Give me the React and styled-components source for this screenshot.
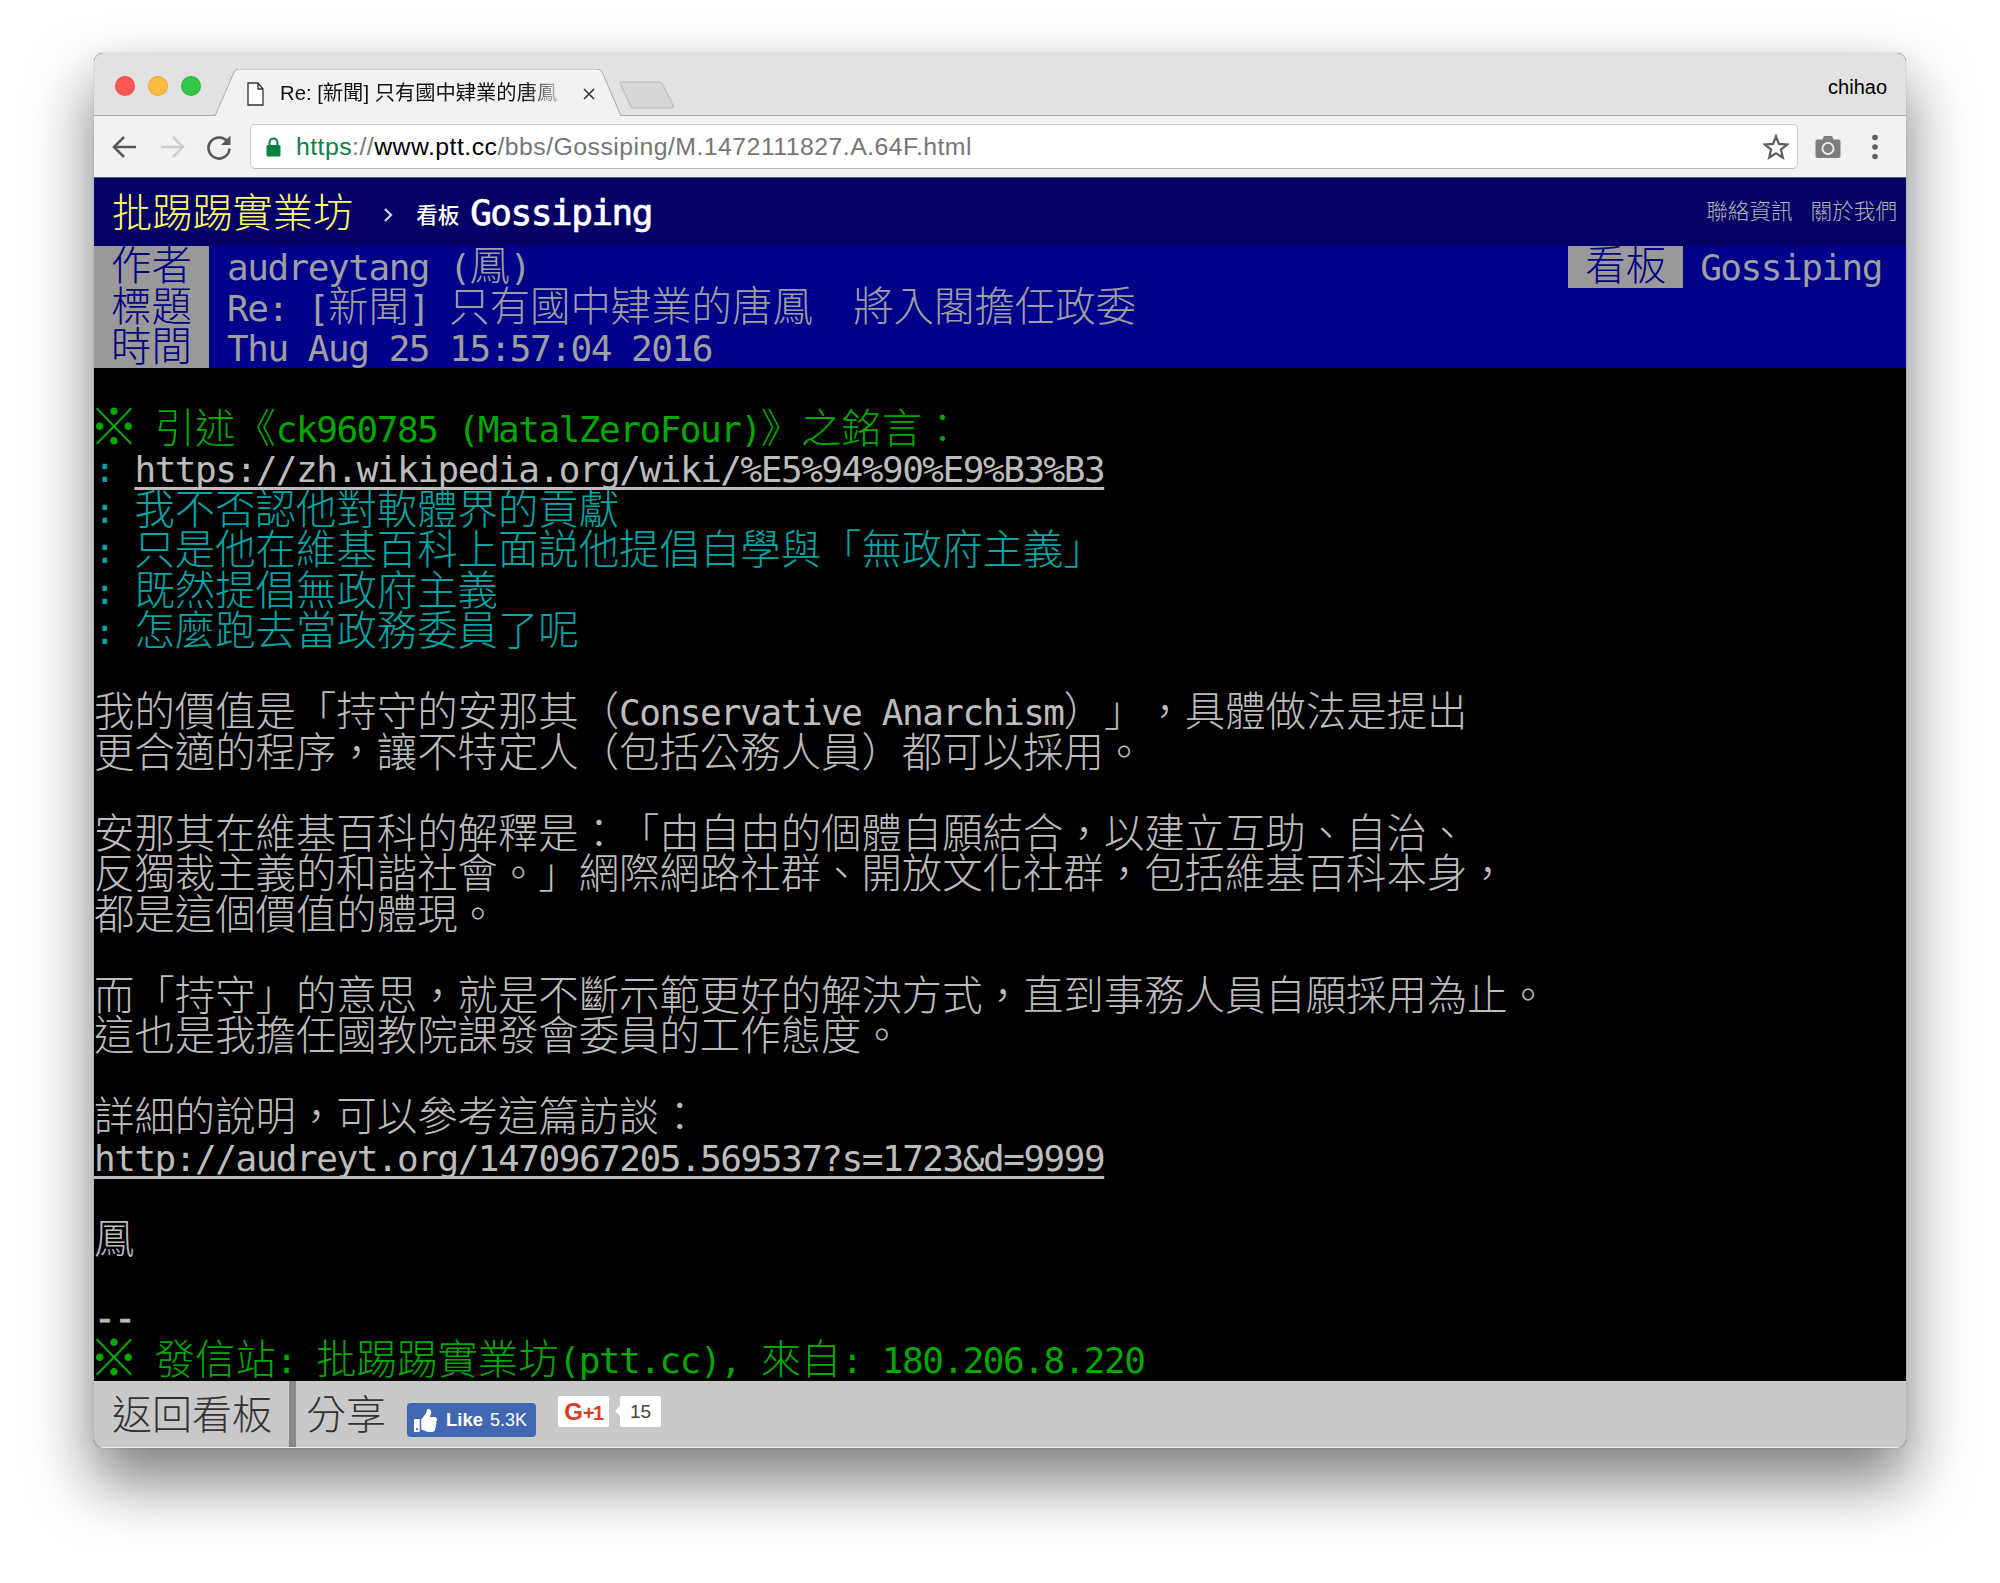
import React from 'react';
import styled, { createGlobalStyle } from 'styled-components';
import { FaThumbsUp } from 'react-icons/fa';

const Global = createGlobalStyle`
  html, body { margin: 0; padding: 0; background: #fff; }
  #root { width: 2000px; height: 1583px; overflow: hidden; }
`;

const Page = styled.div`
  width: 2000px;
  height: 1583px;
  padding: 53px 94px 0 94px;
  box-sizing: border-box;
  background: #fff;
`;

const Win = styled.div`
  width: 1812px;
  height: 1395px;
  display: flex;
  flex-direction: column;
  border-radius: 9px;
  overflow: hidden;
  background: #000;
`;

const WinShadow = styled.div`
  border-radius: 9px;
  box-shadow: 0 32px 62px 2px rgba(0, 0, 0, 0.5), 0 0 1px rgba(0, 0, 0, 0.5);
  width: 1812px;
`;

const TabStrip = styled.div`
  height: 62px;
  flex: none;
  display: flex;
  align-items: flex-end;
  background: #e1e1e1;
  border-bottom: 1px solid #a9a9a9;
  padding-left: 21px;
  position: relative;
`;

const Lights = styled.div`
  display: flex;
  gap: 13px;
  align-self: flex-start;
  margin-top: 23px;
  width: 100px;
  flex: none;
`;

const Light = styled.span`
  width: 20px;
  height: 20px;
  border-radius: 50%;
  background: ${p => p.$c};
  box-shadow: inset 0 0 0 1px rgba(0, 0, 0, 0.1);
`;

const Tab = styled.div`
  position: relative;
  width: 408px;
  height: 47px;
  margin-bottom: -1px;
  flex: none;
  display: flex;
  align-items: flex-start;
  padding: 12px 0 0 32px;
  box-sizing: border-box;
  font: 20.3px/24px "Liberation Sans", "Noto Sans CJK TC", sans-serif;
  color: #111;
`;

const TabShape = styled.svg`
  position: absolute;
  inset: 0;
  width: 408px;
  height: 47px;
`;

const TabIcon = styled.svg`
  position: relative;
  width: 17px;
  height: 24px;
  flex: none;
  margin: 1px 16px 0 0;
`;

const TabTitle = styled.span`
  position: relative;
  width: 278px;
  white-space: pre;
  overflow: hidden;
  -webkit-mask-image: linear-gradient(90deg, #000 88%, rgba(0, 0, 0, 0.25) 100%);
  mask-image: linear-gradient(90deg, #000 88%, rgba(0, 0, 0, 0.25) 100%);
`;

const TabClose = styled.svg`
  position: relative;
  width: 12px;
  height: 12px;
  margin: 7px 0 0 25px;
  flex: none;
`;

const NewTab = styled.svg`
  width: 56px;
  height: 28px;
  flex: none;
  margin: 0 0 6px -4px;
`;

const Profile = styled.div`
  margin-left: auto;
  align-self: flex-start;
  margin-top: 22px;
  padding-right: 19px;
  font: 20px/24px "Liberation Sans", sans-serif;
  color: #000;
`;

const Toolbar = styled.div`
  height: 62px;
  flex: none;
  display: flex;
  align-items: center;
  background: #f2f2f2;
  border-bottom: 1px solid #55557a;
  box-sizing: border-box;
  padding-left: 17px;
`;

const NavIcon = styled.svg`
  width: 28px;
  height: 28px;
  flex: none;
  margin-right: ${p => p.$mr || 19}px;
`;

const Omnibox = styled.div`
  width: 1548px;
  height: 45px;
  box-sizing: border-box;
  flex: none;
  display: flex;
  align-items: center;
  background: #fff;
  border: 1px solid #cfcfcf;
  border-bottom-color: #bbb;
  border-radius: 5px;
  padding: 0 8px 0 15px;
`;

const Lock = styled.svg`
  width: 15px;
  height: 20px;
  flex: none;
  margin-right: 15px;
`;

const Url = styled.div`
  font: 24.8px/30px "Liberation Sans", sans-serif;
  letter-spacing: 0.47px;
  white-space: pre;
  color: #757575;
`;

const UrlPart = styled.span`
  color: ${p => p.$c};
`;

const Star = styled.svg`
  width: 26px;
  height: 26px;
  margin-left: auto;
  flex: none;
`;

const Camera = styled.svg`
  width: 26px;
  height: 24px;
  flex: none;
  margin-left: 17px;
`;

const Dots = styled.svg`
  width: 8px;
  height: 26px;
  flex: none;
  margin-left: 30px;
`;

const TopBar = styled.div`
  height: 68px;
  flex: none;
  display: flex;
  align-items: center;
  background: #060066;
  padding: 0 9px 0 18px;
`;

const Brand = styled.span`
  font: 300 40.2px/1 "Noto Sans CJK TC", sans-serif;
  color: #ffff66;
  margin-top: -4px;
`;

const Crumb = styled.svg`
  width: 10px;
  height: 16px;
  margin: 6px 23px 0 30px;
  flex: none;
`;

const BoardLabel = styled.span`
  font: 500 21.5px/1 "Noto Sans CJK TC", sans-serif;
  color: #fff;
  margin: 4px 11px 0 0;
`;

const BoardName = styled.span`
  font: 400 36px/1 "DejaVu Sans Mono", monospace;
  letter-spacing: -1.47px;
  -webkit-text-stroke: 0.7px #fff;
  color: #fff;
  margin-top: 2px;
`;

const TopLinks = styled.div`
  margin-left: auto;
  display: flex;
  gap: 18px;
  font: 300 21.6px/1 "Noto Sans CJK TC", sans-serif;
  color: #b4b4b4;
  margin-top: -4px;
`;

const Line = styled.div`
  height: 40.5px;
  font: 36px/40.5px "DejaVu Sans Mono", monospace;
  white-space: pre;
  color: ${p => p.$c || 'inherit'};
`;

const Cjk = styled.span`
  font-family: "Noto Sans CJK TC", sans-serif;
  font-size: 40.4px;
  font-weight: 300;
  line-height: 0;
  position: relative;
  top: 2px;
  text-spacing-trim: space-all;
  font-kerning: none;
`;

const Lat = styled.span`
  font-family: "DejaVu Sans Mono", monospace;
  font-size: 36px;
  line-height: 0;
  letter-spacing: -1.47px;
  position: relative;
  top: 1px;
`;

const Dash = styled(Lat)`
  top: -2px;
  -webkit-text-stroke: 0.8px #bdbdbd;
`;

const RefMark = styled.span`
  display: inline-block;
  width: 40.4px;
  text-indent: -5px;
  font-family: "Noto Sans CJK TC", sans-serif;
  font-weight: 100;
  font-size: 50px;
  line-height: 0;
  position: relative;
  top: 4px;
`;

const Meta = styled.div`
  flex: none;
  height: 122px;
  background: #00008a;
  position: relative;
  ${Lat} { top: 2px; }
`;

const MetaRow = styled.div`
  height: 40.67px;
  display: flex;
  align-items: stretch;
`;

const MetaTag = styled.div`
  flex: none;
  width: 115px;
  height: ${p => (p.$tall ? '42px' : 'auto')};
  text-align: center;
  background: #999;
  color: #000080;
`;

const MetaValue = styled.div`
  color: #9f9f9f;
  padding-left: ${p => (p.$right ? 17 : 18)}px;
  white-space: pre;
`;

const MetaRight = styled.div`
  margin-left: auto;
  display: flex;
  padding-right: 24px;
`;

const Screen = styled.div`
  flex: 1;
  min-height: 0;
  overflow: hidden;
  background: #000;
  color: #bdbdbd;
`;

const Link = styled.span`
  color: #bdbdbd;
  text-decoration: underline;
  text-decoration-thickness: 3px;
  text-underline-offset: 5px;
  text-decoration-skip-ink: none;
`;

const Footer = styled.div`
  height: 67px;
  flex: none;
  display: flex;
  background: #c9c9c9;
  color: #333;
  border-bottom: 1px solid #eee;
  box-sizing: border-box;
`;

const FootBtn = styled.div`
  font: 300 40px/62px "Noto Sans CJK TC", sans-serif;
  padding: 0 17px 0 18px;
  border-right: 7px solid #888;
`;

const ShareLabel = styled.div`
  font: 300 40px/62px "Noto Sans CJK TC", sans-serif;
  margin-left: 10px;
`;

const Like = styled.div`
  width: 129px;
  height: 34px;
  margin: 22px 0 0 21px;
  flex: none;
  border-radius: 4px;
  background: #4267b2;
  color: #fff;
  display: flex;
  align-items: center;
  box-sizing: border-box;
  padding-left: 7px;
  font: 18px/1 "Liberation Sans", sans-serif;
`;

const LikeIcon = styled(FaThumbsUp)`
  width: 23px;
  height: 23px;
  margin-right: 9px;
  flex: none;
`;

const LikeWord = styled.b`
  margin-right: 7px;
  font-size: 18.5px;
`;

const PlusOne = styled.div`
  width: 51px;
  height: 31px;
  margin: 15px 0 0 22px;
  flex: none;
  background: #fff;
  border-radius: 2px;
  text-align: center;
  font: 700 20px/31px "Liberation Sans", sans-serif;
  letter-spacing: -1.5px;
  color: #dd3a22;
`;

const PlusG = styled.span`
  font-size: 24px;
  letter-spacing: 0;
`;

const Count = styled.div`
  position: relative;
  width: 41px;
  height: 31px;
  margin: 15px 0 0 11px;
  flex: none;
  background: #fff;
  border-radius: 2px;
  text-align: center;
  font: 19px/31px "Liberation Sans", sans-serif;
  color: #444;
  &::before {
    content: '';
    position: absolute;
    left: -5px;
    top: 10px;
    border-style: solid;
    border-width: 5px 5px 5px 0;
    border-color: transparent #fff transparent transparent;
  }
`;

const T = ({ children }) => {
  const parts = String(children).match(/※|[\x00-\xff]+|[^\x00-\xff※]+/g) || [];
  return parts.map((s, i) => {
    if (s === '※') return <RefMark key={i}>{s}</RefMark>;
    return /^[\x00-\xff]/.test(s) ? <Lat key={i}>{s}</Lat> : <Cjk key={i}>{s}</Cjk>;
  });
};

const GREEN = '#00a800';
const CYAN = '#00a5a5';

const quoted = [
  '我不否認他對軟體界的貢獻',
  '只是他在維基百科上面説他提倡自學與「無政府主義」',
  '既然提倡無政府主義',
  '怎麼跑去當政務委員了呢',
];

const body = [
  ['我的價值是「持守的安那其（Conservative Anarchism）」，具體做法是提出', '更合適的程序，讓不特定人（包括公務人員）都可以採用。'],
  ['安那其在維基百科的解釋是：「由自由的個體自願結合，以建立互助、自治、', '反獨裁主義的和諧社會。」網際網路社群、開放文化社群，包括維基百科本身，', '都是這個價值的體現。'],
  ['而「持守」的意思，就是不斷示範更好的解決方式，直到事務人員自願採用為止。', '這也是我擔任國教院課發會委員的工作態度。'],
];

export default function App() {
  return (
    <Page>
      <Global />
      <WinShadow>
        <Win>
          <TabStrip>
            <Lights>
              <Light $c="#fc5753" />
              <Light $c="#fdbc40" />
              <Light $c="#33c748" />
            </Lights>
            <Tab>
              <TabShape viewBox="0 0 408 47">
                <path d="M0 47 L19 3 Q20.5 0 24 0 L382 0 Q385.5 0 387 3 L406 47" fill="#f2f2f2" stroke="#a9a9a9" strokeWidth="1" />
              </TabShape>
              <TabIcon viewBox="0 0 17 24">
                <path d="M1 1 H11 L16 7 V23 H1 Z M11 1 V7 H16" fill="#fff" stroke="#333" strokeWidth="1.3" />
              </TabIcon>
              <TabTitle>Re: [新聞] 只有國中肄業的唐鳳</TabTitle>
              <TabClose viewBox="0 0 12 12">
                <path d="M1 1 L11 11 M11 1 L1 11" stroke="#333" strokeWidth="1.6" />
              </TabClose>
            </Tab>
            <NewTab viewBox="0 0 56 28">
              <path d="M1 2 Q1 1 3 1 L40 1 Q43 1 44 4 L54 24 Q55 27 52 27 L15 27 Q12 27 11 24 Z" fill="#d6d6d6" stroke="#b5b5b5" strokeWidth="1" />
            </NewTab>
            <Profile>chihao</Profile>
          </TabStrip>
          <Toolbar>
            <NavIcon viewBox="0 0 28 28">
              <path d="M25 14 H4 M13 4 L3 14 L13 24" fill="none" stroke="#5a5a5a" strokeWidth="2.6" />
            </NavIcon>
            <NavIcon viewBox="0 0 28 28">
              <path d="M3 14 H24 M15 4 L25 14 L15 24" fill="none" stroke="#cfcfcf" strokeWidth="2.6" />
            </NavIcon>
            <NavIcon viewBox="0 0 28 28" $mr={17}>
              <path d="M23.5 10.5 A10.5 10.5 0 1 0 24.5 15.5" fill="none" stroke="#5a5a5a" strokeWidth="2.6" />
              <path d="M25.5 2.5 V12 H16 Z" fill="#5a5a5a" />
            </NavIcon>
            <Omnibox>
              <Lock viewBox="0 0 15 20">
                <path d="M3.5 8 V5.5 A4 4 0 0 1 11.5 5.5 V8" fill="none" stroke="#0b8043" strokeWidth="2" />
                <rect x="0.5" y="8" width="14" height="11.5" rx="1.5" fill="#0b8043" />
              </Lock>
              <Url>
                <UrlPart $c="#0b8043">https</UrlPart>
                <UrlPart $c="#777">://</UrlPart>
                <UrlPart $c="#000">www.ptt.cc</UrlPart>/bbs/Gossiping/M.1472111827.A.64F.html
              </Url>
              <Star viewBox="0 0 26 26">
                <path d="M13 2.5 L16 10 L24 10.6 L17.9 15.7 L19.8 23.5 L13 19.3 L6.2 23.5 L8.1 15.7 L2 10.6 L10 10 Z" fill="none" stroke="#5f5f5f" strokeWidth="2.3" />
              </Star>
            </Omnibox>
            <Camera viewBox="0 0 26 24">
              <path d="M2.5 4.5 H7.5 L9 1 H17 L18.5 4.5 H23.5 Q25.5 4.5 25.5 6.5 V21 Q25.5 23 23.5 23 H2.5 Q0.5 23 0.5 21 V6.5 Q0.5 4.5 2.5 4.5 Z" fill="#7d7d7d" />
              <circle cx="13" cy="13.5" r="5.6" fill="#7d7d7d" stroke="#f2f2f2" strokeWidth="1.8" />
            </Camera>
            <Dots viewBox="0 0 8 26">
              <circle cx="4" cy="3.5" r="2.8" fill="#5f5f5f" />
              <circle cx="4" cy="13" r="2.8" fill="#5f5f5f" />
              <circle cx="4" cy="22.5" r="2.8" fill="#5f5f5f" />
            </Dots>
          </Toolbar>
          <TopBar>
            <Brand>批踢踢實業坊</Brand>
            <Crumb viewBox="0 0 10 16">
              <path d="M2 2 L8 8 L2 14" fill="none" stroke="#d8d8e8" strokeWidth="2.2" />
            </Crumb>
            <BoardLabel>看板</BoardLabel>
            <BoardName>Gossiping</BoardName>
            <TopLinks>
              <span>聯絡資訊</span>
              <span>關於我們</span>
            </TopLinks>
          </TopBar>
          <Meta>
            <MetaRow>
              <MetaTag><Line><T>作者</T></Line></MetaTag>
              <MetaValue><Line><T>audreytang (鳳)</T></Line></MetaValue>
              <MetaRight>
                <MetaTag $tall><Line><T>看板</T></Line></MetaTag>
                <MetaValue $right><Line><T>Gossiping</T></Line></MetaValue>
              </MetaRight>
            </MetaRow>
            <MetaRow>
              <MetaTag><Line><T>標題</T></Line></MetaTag>
              <MetaValue><Line><T>Re: [新聞] 只有國中肄業的唐鳳  將入閣擔任政委</T></Line></MetaValue>
            </MetaRow>
            <MetaRow>
              <MetaTag><Line><T>時間</T></Line></MetaTag>
              <MetaValue><Line><T>Thu Aug 25 15:57:04 2016</T></Line></MetaValue>
            </MetaRow>
          </Meta>
          <Screen>
            <Line />
            <Line $c={GREEN}><T>※ 引述《ck960785 (MatalZeroFour)》之銘言：</T></Line>
            <Line $c={CYAN}><T>: </T><Link><T>https://zh.wikipedia.org/wiki/%E5%94%90%E9%B3%B3</T></Link></Line>
            {quoted.map(q => (
              <Line key={q} $c={CYAN}><T>{': ' + q}</T></Line>
            ))}
            {body.map((para, i) => (
              <React.Fragment key={i}>
                <Line />
                {para.map(l => <Line key={l}><T>{l}</T></Line>)}
              </React.Fragment>
            ))}
            <Line />
            <Line><T>詳細的說明，可以參考這篇訪談：</T></Line>
            <Line><Link><T>http://audreyt.org/1470967205.569537?s=1723&d=9999</T></Link></Line>
            <Line />
            <Line><T>鳳</T></Line>
            <Line />
            <Line><Dash>--</Dash></Line>
            <Line $c={GREEN}><T>※ 發信站: 批踢踢實業坊(ptt.cc), 來自: 180.206.8.220</T></Line>
          </Screen>
          <Footer>
            <FootBtn>返回看板</FootBtn>
            <ShareLabel>分享</ShareLabel>
            <Like>
              <LikeIcon />
              <LikeWord>Like</LikeWord>
              <span>5.3K</span>
            </Like>
            <PlusOne><PlusG>G</PlusG>+1</PlusOne>
            <Count>15</Count>
          </Footer>
        </Win>
      </WinShadow>
    </Page>
  );
}
